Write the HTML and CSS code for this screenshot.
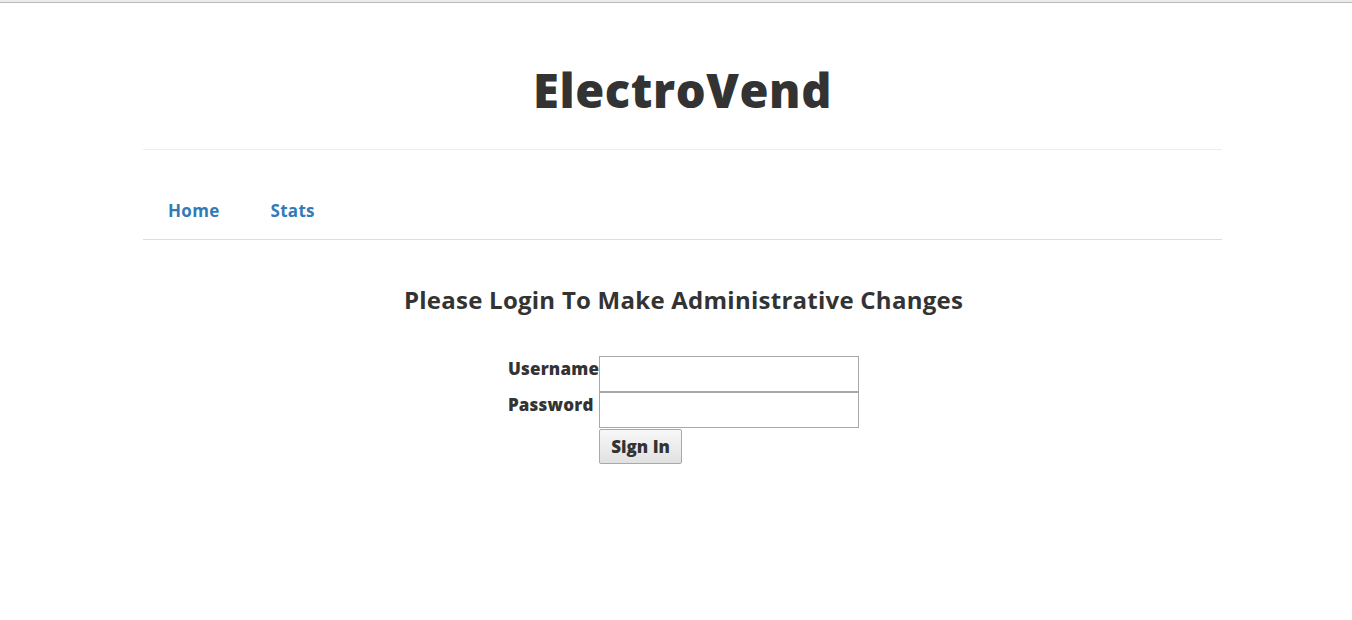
FILE: index.html
```html
<!DOCTYPE html>
<html>
<head>
<meta charset="utf-8">
<title>ElectroVend</title>
<link rel="stylesheet" href="styles.css">
</head>
<body>
<div class="topbar"></div>
<div class="container">
  <header class="masthead">
    <h1 class="brand">ElectroVend</h1>
  </header>
  <nav class="nav">
    <a href="#" class="nav-link">Home</a>
    <a href="#" class="nav-link">Stats</a>
  </nav>
  <main class="content">
    <h2 class="page-title">Please Login To Make Administrative Changes</h2>
    <form class="login">
      <table class="login-table">
        <tr>
          <td class="lbl">Username</td>
          <td><input type="text" class="field"></td>
        </tr>
        <tr>
          <td class="lbl">Password</td>
          <td><input type="password" class="field"></td>
        </tr>
        <tr>
          <td></td>
          <td><button type="button" class="btn">Sign In</button></td>
        </tr>
      </table>
    </form>
  </main>
</div>
</body>
</html>
```
FILE: styles.css
```css
html, body {
  margin: 0;
  padding: 0;
  background: #fff;
}
body {
  font-family: "Open Sans", "Noto Sans", sans-serif;
  color: #333;
}
.topbar {
  height: 2px;
  background: #ececec;
  border-bottom: 1px solid #b9b9b9;
}
.container {
  width: 1079px;
  margin-left: 143px;
}
.masthead {
  border-bottom: 1px solid #eee;
  height: 146px;
  display: flex;
  justify-content: center;
}
.brand {
  margin: 57px 0 0;
  font-size: 47px;
  line-height: 60px;
  font-weight: 800;
  color: #333;
  letter-spacing: 0.6px;
}
.nav {
  display: flex;
  align-items: center;
  height: 89px;
  padding: 0 0 0 25px;
  gap: 51px;
  border-bottom: 1px solid #ddd;
}
.nav-link {
  color: #337ab7;
  font-weight: 700;
  font-size: 17px;
  letter-spacing: 0.3px;
  text-decoration: none;
  margin-top: 31px;
}
.content {
  display: flex;
  flex-direction: column;
  align-items: center;
}
.page-title {
  margin: 44px 0 0 2px;
  font-size: 24px;
  line-height: 32px;
  font-weight: 700;
  color: #333;
  letter-spacing: 0.25px;
}
.login {
  margin-top: 40px;
  padding-left: 2px;
}
.login-table {
  border-collapse: collapse;
}
.login-table td {
  padding: 0;
  vertical-align: top;
}
.lbl {
  font-weight: 800;
  font-size: 17px;
  line-height: 26px;
  letter-spacing: 0.2px;
  padding-right: 1px;
  text-align: left;
}
.field {
  display: block;
  box-sizing: border-box;
  width: 260px;
  height: 36px;
  margin: 0;
  border: 1px solid #a9a9a9;
  background: #fff;
}
.btn {
  margin-top: 1px;
  box-sizing: border-box;
  height: 35px;
  width: 83px;
  padding: 0;
  font-family: "Open Sans", sans-serif;
  font-weight: 800;
  font-size: 17px;
  color: #333;
  border: 1px solid #a9a9a9;
  border-radius: 2px;
  background: linear-gradient(#f8f8f8, #e1e1e1);
}
```
